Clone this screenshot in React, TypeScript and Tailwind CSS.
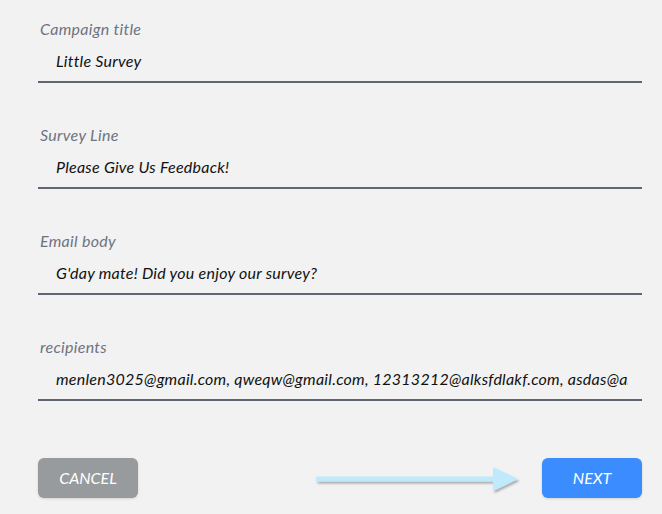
import React from "react"

const fields = [
    { label: "Campaign title", value: "Little Survey" },
    { label: "Survey Line", value: "Please Give Us Feedback!" },
    { label: "Email body", value: "G'day mate! Did you enjoy our survey?" },
    {
        label: "recipients",
        value: "menlen3025@gmail.com, qweqw@gmail.com, 12313212@alksfdlakf.com, asdas@asdasd.com, hello@world.com",
    },
]

function Field({ label, value }: { label: string; value: string }) {
    return (
        <div className="flex flex-col">
            <label className="h-5 pl-[2px] text-[16px] leading-5 italic tracking-[0.3px] text-[#6e7381]">{label}</label>
            <input
                readOnly
                value={value}
                className="h-[44px] w-full bg-transparent pl-[18px] pr-[14px] pt-[1px] text-[16px] italic tracking-[0.25px] text-[#111] outline-none border-b-2 border-[#5f6672]"
            />
        </div>
    )
}

function Arrow() {
    return (
        <svg width="212" height="32" viewBox="0 0 212 32" className="shrink-0">
            <defs>
                <filter id="sh" x="-10%" y="-50%" width="120%" height="200%">
                    <feDropShadow dx="1.5" dy="2" stdDeviation="1" floodColor="#000" floodOpacity="0.3" />
                </filter>
            </defs>
            <path
                d="M1 10.5 H178 V1 L203 13 L178 25 V15.5 H1 Z"
                fill="#bfeafb"
                filter="url(#sh)"
            />
        </svg>
    )
}

export default function App() {
    return (
        <div
            className="h-[514px] w-[662px] bg-[#f2f2f2] pl-[38px] pr-[20px] pt-[19px]"
            style={{ fontFamily: "Lato, 'Open Sans', sans-serif" }}
        >
            <div className="flex w-[604px] flex-col gap-[42px]">
                {fields.map((f) => (
                    <Field key={f.label} label={f.label} value={f.value} />
                ))}
            </div>

            <div className="mt-[56px] flex w-[604px] items-center">
                <button className="h-10 w-[100px] rounded-md bg-[#989b9e] text-[16px] italic text-white shadow-sm">
                    CANCEL
                </button>
                <div className="ml-[177px] mt-[9px]">
                    <Arrow />
                </div>
                <button className="ml-auto h-10 w-[100px] rounded-md bg-[#3a8cff] text-[16px] italic text-white shadow-sm">
                    NEXT
                </button>
            </div>
        </div>
    )
}
